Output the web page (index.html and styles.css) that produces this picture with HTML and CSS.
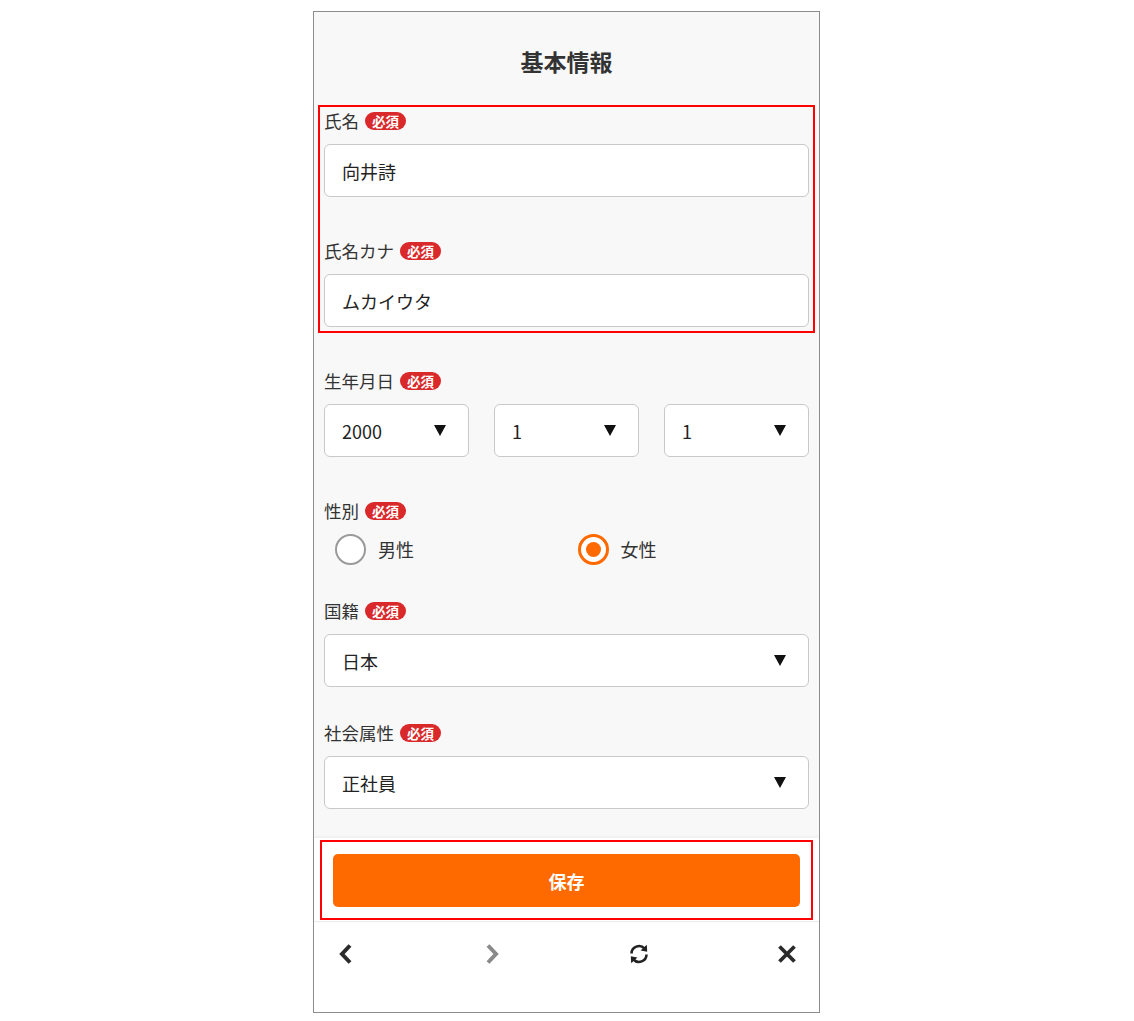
FILE: index.html
```html
<!DOCTYPE html>
<html lang="ja">
<head>
<meta charset="utf-8">
<title>基本情報</title>
<link rel="stylesheet" href="styles.css">
</head>
<body>
<div class="phone">
  <main class="content">
    <h1 class="title">基本情報</h1>
    <div class="group-hl">
      <div class="field">
        <div class="label">氏名<span class="badge">必須</span></div>
        <div class="input">向井詩</div>
      </div>
      <div class="field field-gap">
        <div class="label">氏名カナ<span class="badge">必須</span></div>
        <div class="input">ムカイウタ</div>
      </div>
    </div>
    <div class="field field-gap">
      <div class="label">生年月日<span class="badge">必須</span></div>
      <div class="date-row">
        <div class="input select"><span>2000</span><span class="tri"></span></div>
        <div class="input select"><span>1</span><span class="tri"></span></div>
        <div class="input select"><span>1</span><span class="tri"></span></div>
      </div>
    </div>
    <div class="field field-gap">
      <div class="label">性別<span class="badge">必須</span></div>
      <div class="radio-row">
        <label class="radio"><span class="circle"></span>男性</label>
        <label class="radio"><span class="circle checked"></span>女性</label>
      </div>
    </div>
    <div class="field field-gap-sm">
      <div class="label">国籍<span class="badge">必須</span></div>
      <div class="input select"><span>日本</span><span class="tri"></span></div>
    </div>
    <div class="field field-gap-md">
      <div class="label">社会属性<span class="badge">必須</span></div>
      <div class="input select"><span>正社員</span><span class="tri"></span></div>
    </div>
  </main>
  <div class="footer">
    <div class="save-area">
      <button class="save" type="button">保存</button>
    </div>
  </div>
  <nav class="nav">
    <svg class="icon" width="20" height="24" viewBox="0 0 20 24"><polyline points="14,3.5 6,12 14,20.5" fill="none" stroke="#2b2b2b" stroke-width="4" stroke-linejoin="miter"/></svg>
    <svg class="icon" width="20" height="24" viewBox="0 0 20 24"><polyline points="6,3.5 14,12 6,20.5" fill="none" stroke="#8a8a8a" stroke-width="4" stroke-linejoin="miter"/></svg>
    <svg class="icon" width="22" height="24" viewBox="0 0 22 24">
      <path d="M3.5 11.5 A7.5 7.5 0 0 1 16.5 6.5" fill="none" stroke="#222" stroke-width="2.6"/>
      <polygon points="18.8,2.8 19.2,9.8 12.6,8.6" fill="#222"/>
      <path d="M18.5 12.5 A7.5 7.5 0 0 1 5.5 17.5" fill="none" stroke="#222" stroke-width="2.6"/>
      <polygon points="3.2,21.2 2.8,14.2 9.4,15.4" fill="#222"/>
    </svg>
    <svg class="icon" width="22" height="24" viewBox="0 0 22 24"><path d="M3.5 4.5 L18.5 19.5 M18.5 4.5 L3.5 19.5" fill="none" stroke="#2b2b2b" stroke-width="3.8"/></svg>
  </nav>
</div>
</body>
</html>
```

FILE: styles.css
```css
* { box-sizing: border-box; }

html, body {
  margin: 0;
  padding: 0;
  background: #ffffff;
}

body {
  padding-top: 11px;
  padding-right: 1px;
  font-family: "Noto Sans CJK JP", "Noto Sans", sans-serif;
  color: #333333;
}

.phone {
  width: 507px;
  height: 1002px;
  margin: 0 auto;
  border: 1px solid #8c8c8c;
  display: flex;
  flex-direction: column;
  background: #ffffff;
}

.content {
  background: #f8f8f8;
  padding: 0 10px 29px;
}

.title {
  margin: 0;
  height: 99px;
  display: flex;
  align-items: center;
  justify-content: center;
  font-size: 23px;
  font-weight: 700;
  color: #333333;
  padding-bottom: 2px;
}

.group-hl {
  outline: 2px solid #ff0000;
  outline-offset: 4px;
}

.field-gap { margin-top: 44px; }
.field-gap-sm { margin-top: 34px; }
.field-gap-md { margin-top: 36px; }

.label {
  height: 20px;
  display: flex;
  align-items: center;
  font-size: 17.5px;
  line-height: 20px;
  color: #333333;
  margin-bottom: 13px;
}

.badge {
  display: inline-flex;
  align-items: center;
  justify-content: center;
  margin-left: 6px;
  height: 18px;
  padding: 0 7px;
  border-radius: 9px;
  background: #d9292b;
  color: #ffffff;
  font-size: 13.5px;
  font-weight: 700;
  line-height: 18px;
}

.input {
  height: 53px;
  background: #ffffff;
  border: 1px solid #c9c9c9;
  border-radius: 6px;
  display: flex;
  align-items: center;
  padding: 0 17px;
  font-size: 18px;
  color: #222222;
}

.select {
  justify-content: space-between;
  padding-right: 22px;
}

.tri {
  width: 0;
  height: 0;
  border-left: 6.5px solid transparent;
  border-right: 6.5px solid transparent;
  border-top: 11px solid #111111;
}

.date-row {
  display: grid;
  grid-template-columns: repeat(3, 1fr);
  column-gap: 25px;
}

.radio-row {
  display: grid;
  grid-template-columns: 1fr 1fr;
  margin-top: -3px;
  height: 36px;
}

.radio {
  display: flex;
  align-items: center;
  padding-left: 11px;
  font-size: 18px;
  color: #333333;
}

.circle {
  width: 31px;
  height: 31px;
  border-radius: 50%;
  border: 2.5px solid #9a9a9a;
  margin-right: 12px;
  background: #ffffff;
  display: flex;
  align-items: center;
  justify-content: center;
}

.circle.checked {
  border: 3px solid #ff6a00;
}

.circle.checked::after {
  content: "";
  width: 15px;
  height: 15px;
  border-radius: 50%;
  background: #ff6a00;
}

.footer {
  background: #ffffff;
  box-shadow: 0 -1px 3px rgba(0, 0, 0, 0.06);
  border-bottom: 1px solid #ececec;
  padding: 2px 6px 1px;
}

.save-area {
  border: 2px solid #ff0000;
  padding: 12px 11px 11px;
}

.save {
  display: block;
  width: 100%;
  height: 53px;
  border: none;
  border-radius: 5px;
  background: #ff6a00;
  color: #ffffff;
  font-family: "Noto Sans CJK JP", "Noto Sans", sans-serif;
  font-size: 18px;
  font-weight: 700;
  cursor: pointer;
}

.nav {
  display: flex;
  justify-content: space-between;
  align-items: center;
  height: 64px;
  padding: 0 21px 0 22px;
}

.icon {
  display: block;
}
```
